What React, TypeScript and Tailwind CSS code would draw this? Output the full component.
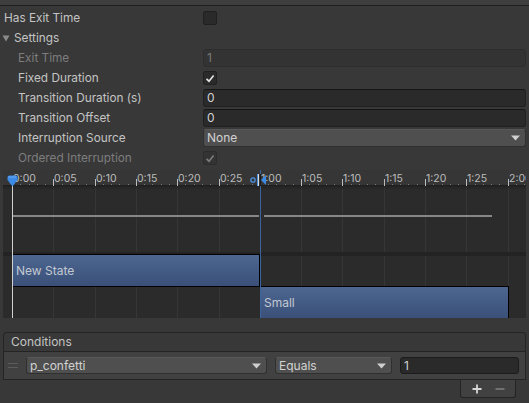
import React from "react";

const FONT = { fontFamily: "Inter, 'Noto Sans', sans-serif" };

const TICK = 41.3;
const ZERO = 9;
const labels = ["0:00", "0:05", "0:10", "0:15", "0:20", "0:25", "1:00", "1:05", "1:10", "1:15", "1:20", "1:25", "2:00"];

function Checkbox({ checked, disabled }: { checked?: boolean; disabled?: boolean }) {
  return (
    <div
      className={`w-[14px] h-[14px] rounded-[2px] border flex items-center justify-center ${
        disabled ? "bg-[#333333] border-[#2c2c2c]" : "bg-[#2a2a2a] border-[#202020]"
      }`}
    >
      {checked && (
        <svg width="10" height="9" viewBox="0 0 10 9">
          <path
            d="M1.5 4.8 L4 7.2 L8.6 1.6"
            fill="none"
            stroke={disabled ? "#7c7c7c" : "#e6e6e6"}
            strokeWidth="1.6"
          />
        </svg>
      )}
    </div>
  );
}

function Arrow() {
  return (
    <svg width="9" height="6" viewBox="0 0 9 6">
      <path d="M0 0.5 H9 L4.5 5.5 Z" fill="#cfcfcf" />
    </svg>
  );
}

function Row({
  label,
  indent,
  disabled,
  children,
}: {
  label: React.ReactNode;
  indent?: boolean;
  disabled?: boolean;
  children?: React.ReactNode;
}) {
  return (
    <div className="h-[20px] flex items-center pr-[3px]">
      <div
        className={`shrink-0 w-[203px] text-[11.8px] leading-none pt-[1px] ${indent ? "pl-[18px]" : "pl-[4px]"} ${
          disabled ? "text-[#7d7d7d]" : "text-[#c4c4c4]"
        }`}
      >
        {label}
      </div>
      <div className="flex-1 flex items-center">{children}</div>
    </div>
  );
}

function Field({ value, disabled }: { value: string; disabled?: boolean }) {
  return (
    <div
      className={`w-full h-[18px] rounded-[3px] border flex items-center pl-[3px] text-[12px] ${
        disabled
          ? "bg-[#333333] border-[#2d2d2d] text-[#7a7a7a]"
          : "bg-[#2a2a2a] border-[#212121] border-t-[#151515] text-[#d2d2d2]"
      }`}
    >
      {value}
    </div>
  );
}

function Dropdown({ value, className }: { value: string; className?: string }) {
  return (
    <div
      className={`h-[17px] rounded-[3px] bg-[#4f4f4f] border border-[#303030] border-t-[#585858] flex items-center justify-between pl-[3px] pr-[5px] text-[12px] text-[#d2d2d2] ${
        className ?? ""
      }`}
    >
      <span>{value}</span>
      <Arrow />
    </div>
  );
}

function Timeline() {
  const ticks = labels.map((l, i) => ({ l, x: ZERO + TICK * i }));
  const minors = Array.from({ length: 64 }, (_, i) => ZERO + (TICK / 5) * i);
  return (
    <div className="relative mx-[3px] mt-[2px] h-[148px] overflow-hidden bg-[#2b2b2b]">
      {/* ruler */}
      <div className="absolute left-0 right-0 top-0 h-[16px] bg-[#363636] border-b border-[#1f1f1f]" />
      {minors.map((x, i) => (
        <div key={"m" + i} className="absolute top-[14px] w-px h-px bg-[#7a7a7a]" style={{ left: Math.round(x) }} />
      ))}
      {ticks.map((t) => (
        <React.Fragment key={t.l}>
          <div className="absolute top-[9px] h-[7px] w-px bg-[#bcbcbc]" style={{ left: Math.round(t.x) }} />
          <div className="absolute top-[16px] h-[132px] w-px bg-[#363636]" style={{ left: Math.round(t.x) }} />
          <div
            className="absolute top-[3px] text-[10.5px] leading-[12px] text-[#bdbdbd] whitespace-nowrap"
            style={{ left: Math.round(t.x) + 1 }}
          >
            {t.l}
          </div>
        </React.Fragment>
      ))}
      {/* top shadow */}
      <div className="absolute left-0 right-0 top-[16px] h-[4px] bg-gradient-to-b from-[#232323] to-transparent" />
      {/* curve */}
      <div className="absolute top-[45px] h-[2px] bg-[#878787]" style={{ left: ZERO, width: 247 }} />
      <div className="absolute top-[45px] h-[2px] bg-[#878787]" style={{ left: 261, width: 228 }} />
      {/* separator band */}
      <div className="absolute left-0 right-0 top-[82px] h-[4px] bg-[#232323]" />
      {/* state bars */}
      <div
        className="absolute top-[84px] h-[33px] border border-black bg-gradient-to-b from-[#4d6790] to-[#3a5079] flex items-center pl-[3px] text-[12px] text-[#c2c8d2]"
        style={{ left: ZERO, width: 248 }}
      >
        New State
      </div>
      <div
        className="absolute top-[116px] h-[33px] border border-black bg-gradient-to-b from-[#4d6790] to-[#3a5079] flex items-center pl-[3px] text-[12px] text-[#c2c8d2]"
        style={{ left: 257, width: 249 }}
      >
        Small
      </div>
      {/* playhead */}
      <div className="absolute top-[16px] h-[132px] w-px bg-[#d0d0d0]" style={{ left: ZERO }} />
      <svg className="absolute top-[5px]" style={{ left: ZERO - 5 }} width="11" height="12" viewBox="0 0 11 12">
        <path d="M0.5 2.5 Q0.5 0.5 2.5 0.5 H8.5 Q10.5 0.5 10.5 2.5 V5 L5.5 11.5 L0.5 5 Z" fill="#3c8be6" />
        <path d="M1.5 2 H9.5" stroke="#9cc6f5" strokeWidth="1" strokeDasharray="1 1" />
      </svg>
      {/* transition markers */}
      <div className="absolute top-0 h-[148px] w-px bg-[#3a64a0]" style={{ left: 257 }} />
      <svg className="absolute top-[3px]" style={{ left: 246 }} width="20" height="13" viewBox="0 0 20 13">
        <circle cx="4" cy="7" r="2.2" fill="none" stroke="#4a90e2" strokeWidth="1.3" />
        <rect x="8" y="1" width="1" height="12" fill="#4a90e2" />
        <rect x="9" y="1" width="1" height="12" fill="#d8d8d8" />
        <rect x="11" y="1" width="1" height="12" fill="#1a1a1a" />
        <path d="M12 7 L17 2 V12 Z" fill="#3c8be6" />
      </svg>
    </div>
  );
}

function Conditions() {
  return (
    <div className="mx-[3px] mt-[14px]">
      <div className="h-[20px] border border-[#242424] rounded-t-[3px] bg-[#383838] flex items-center pl-[7px] text-[12px] text-[#c4c4c4]">
        Conditions
      </div>
      <div className="h-[28px] border border-t-0 border-[#242424] bg-[#414141] flex items-center pl-[4px] pr-[6px]">
        <div className="w-[10px] flex flex-col gap-[3px] mr-[8px]">
          <div className="h-px bg-[#5c5c5c]" />
          <div className="h-px bg-[#5c5c5c]" />
        </div>
        <Dropdown value="p_confetti" className="w-[241px]" />
        <Dropdown value="Equals" className="w-[117px] ml-[8px]" />
        <div className="ml-[8px] flex-1 h-[17px] rounded-[3px] bg-[#2a2a2a] border border-[#1c1c1c] flex items-center pl-[3px] text-[12px] text-[#d2d2d2]">
          1
        </div>
      </div>
      <div className="flex justify-end pr-[10px]">
        <div className="w-[56px] h-[18px] border border-t-0 border-[#242424] rounded-b-[3px] bg-[#414141] flex items-center justify-around px-[4px] text-[#d0d0d0]">
          <svg width="10" height="10" viewBox="0 0 10 10">
            <path d="M5 0.5 V9.5 M0.5 5 H9.5" stroke="#d6d6d6" strokeWidth="1.8" />
          </svg>
          <svg width="10" height="10" viewBox="0 0 10 10">
            <path d="M0.5 5 H9.5" stroke="#7c7c7c" strokeWidth="1.6" />
          </svg>
        </div>
      </div>
    </div>
  );
}

export default function App() {
  return (
    <div className="w-[529px] h-[403px] bg-[#383838] overflow-hidden" style={FONT}>
      <div className="h-[5px] bg-[#3e3e3e]" />
      <div className="h-px bg-[#1e1e1e]" />
      <div className="pt-[2px]">
        <Row label="Has Exit Time">
          <Checkbox />
        </Row>
        <Row
          label={
            <span className="flex items-center -ml-[2px]">
              <svg width="8" height="7" viewBox="0 0 8 7" className="mr-[4px]">
                <path d="M0.5 0.5 H7.5 L4 6.5 Z" fill="#8a8a8a" />
              </svg>
              Settings
            </span>
          }
        />
        <Row label="Exit Time" indent disabled>
          <Field value="1" disabled />
        </Row>
        <Row label="Fixed Duration" indent>
          <Checkbox checked />
        </Row>
        <Row label="Transition Duration (s)" indent>
          <Field value="0" />
        </Row>
        <Row label="Transition Offset" indent>
          <Field value="0" />
        </Row>
        <Row label="Interruption Source" indent>
          <Dropdown value="None" className="w-full h-[18px]" />
        </Row>
        <Row label="Ordered Interruption" indent disabled>
          <Checkbox checked disabled />
        </Row>
      </div>
      <Timeline />
      <Conditions />
    </div>
  );
}
